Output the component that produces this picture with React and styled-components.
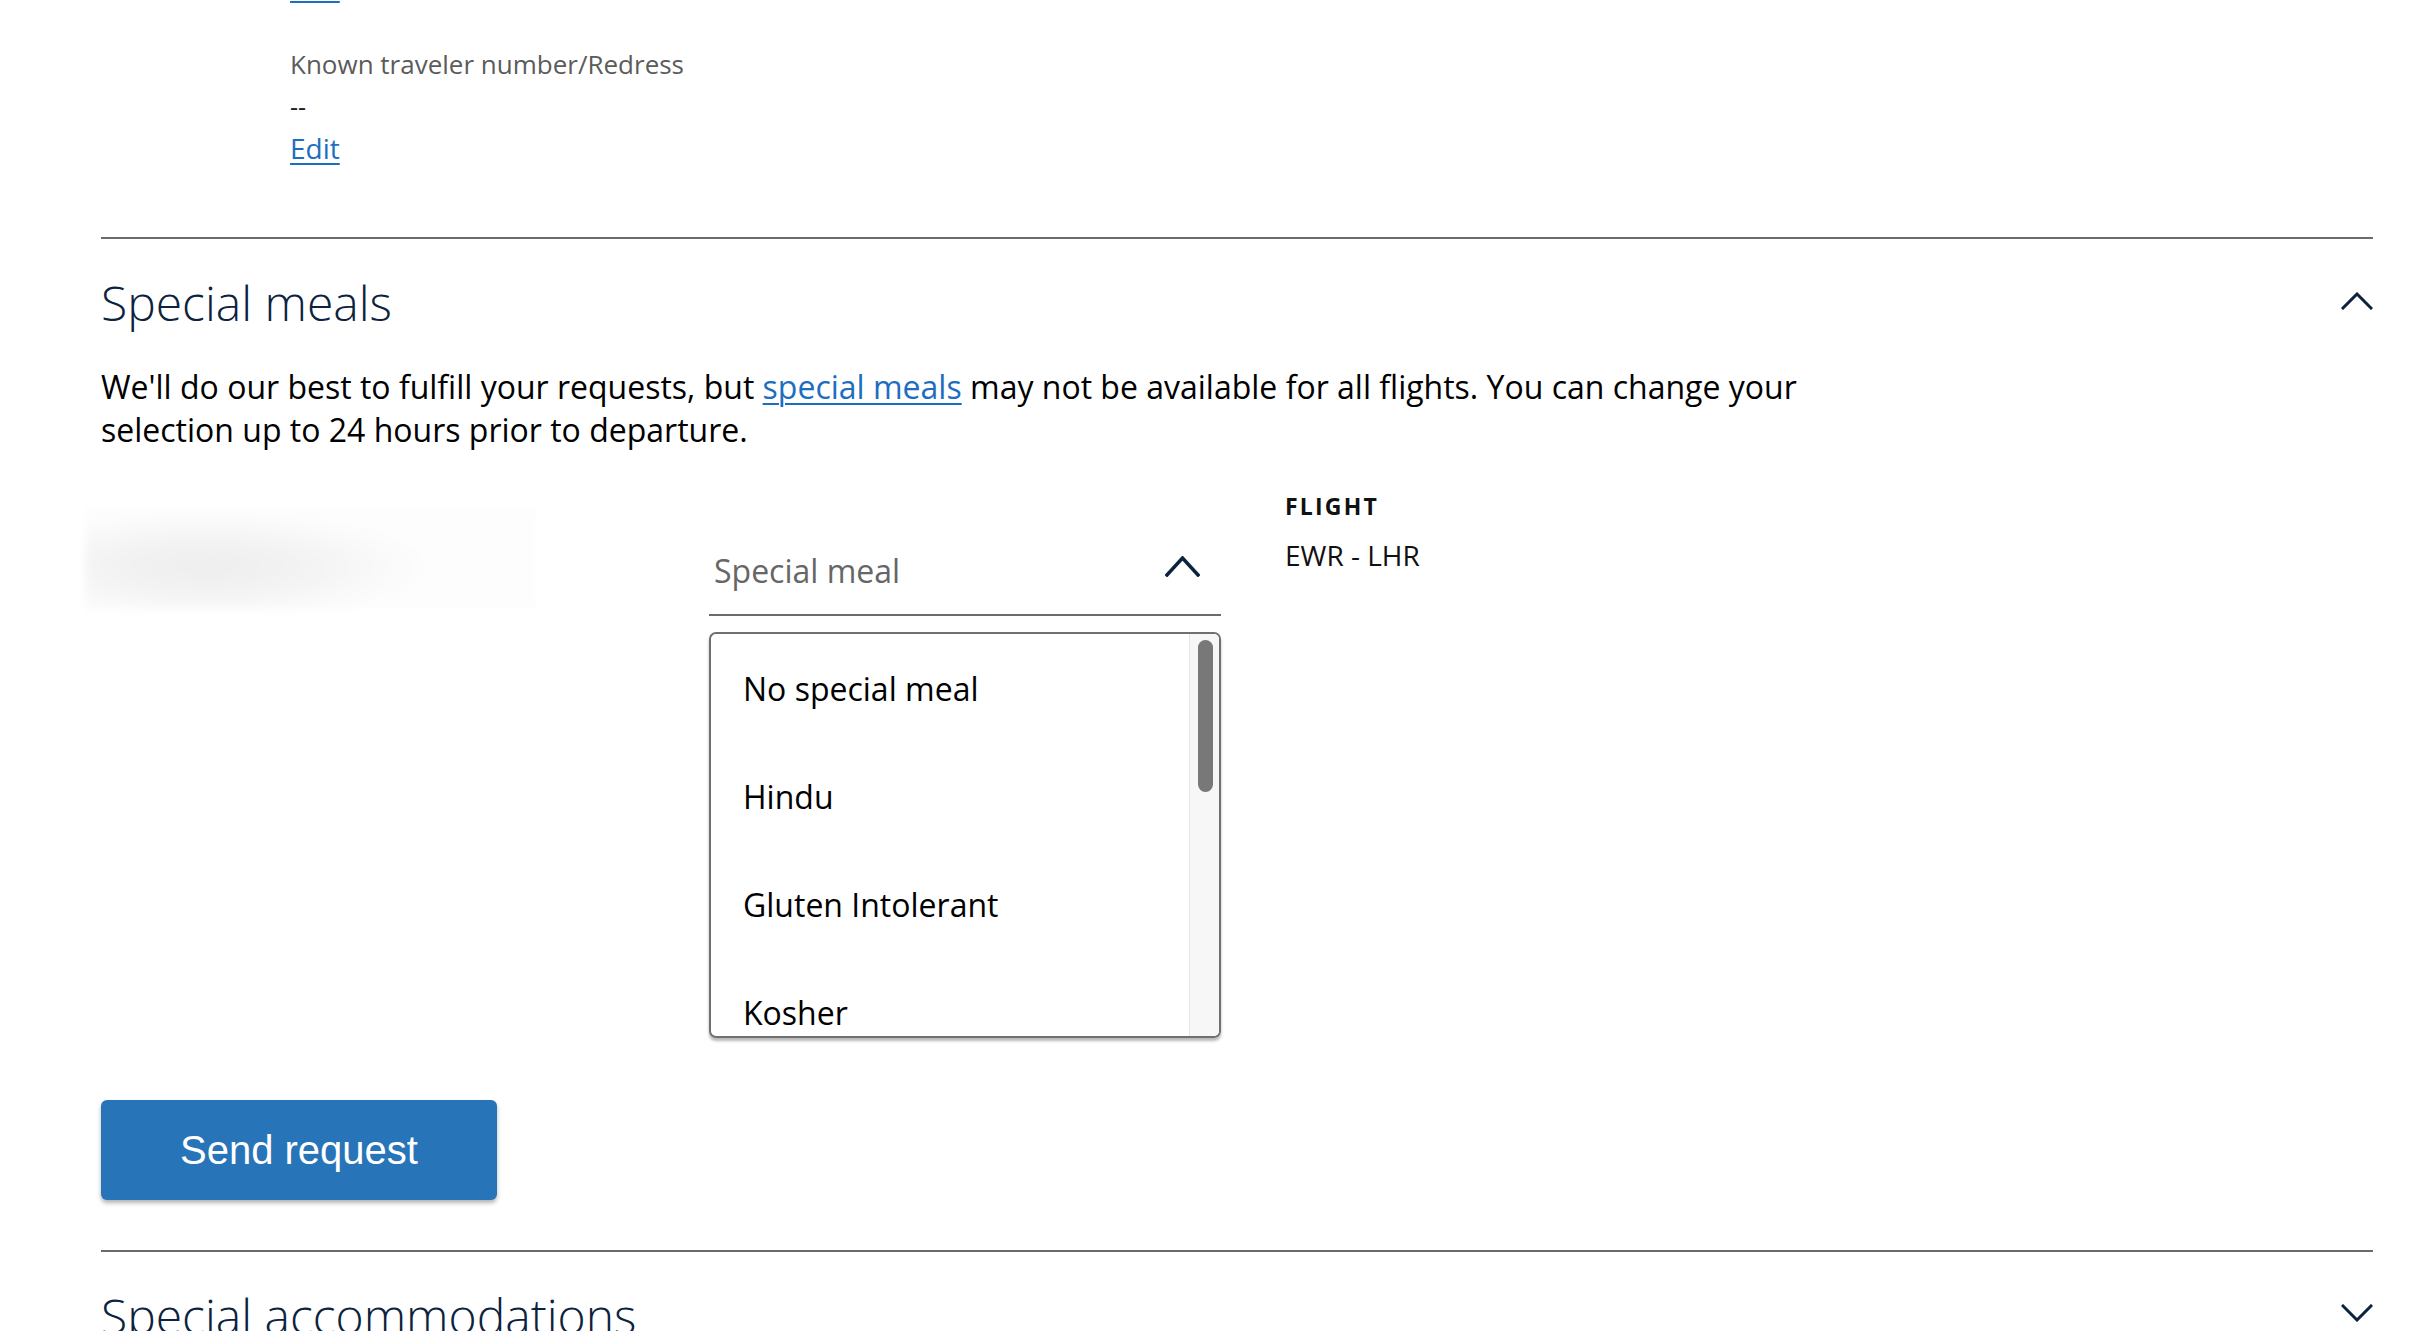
import styled, { createGlobalStyle } from "styled-components";

const GlobalStyle = createGlobalStyle`
  html, body {
    margin: 0;
    padding: 0;
    background: #fff;
  }
  body {
    font-family: "Open Sans", "Liberation Sans", sans-serif;
    color: #000;
    overflow: hidden;
  }
  * {
    box-sizing: border-box;
  }
`;

const Page = styled.div`
  padding: 0 62px 0 101px;
`;

const TravelerInfo = styled.div`
  display: flex;
  flex-direction: column;
  align-items: flex-start;
  padding-left: 189px;
  margin-top: -35px;
`;

const FieldLabel = styled.div`
  margin-top: ${({ $gap }) => $gap || 0}px;
  font-size: 26px;
  line-height: 42px;
  color: #5b5b5b;
`;

const FieldValue = styled.div`
  font-size: 25px;
  line-height: 42px;
  color: #222;
`;

const EditLink = styled.a`
  font-size: 28px;
  line-height: 42px;
  color: #1d6ec0;
  text-decoration: underline;
  text-decoration-thickness: 2px;
  text-underline-offset: 4px;
  cursor: pointer;
`;

const Divider = styled.hr`
  margin: ${({ $top }) => $top}px 0 0;
  border: 0;
  border-top: 2px solid #6b6b6b;
`;

const AccordionHeader = styled.div`
  display: flex;
  align-items: center;
  justify-content: space-between;
  margin-top: 32px;
  height: 64px;
`;

const AccordionTitle = styled.h2`
  margin: 0;
  font-size: 48px;
  font-weight: 300;
  line-height: 64px;
  color: #0c2340;
`;

const ChevronBox = styled.svg`
  flex: none;
  margin-bottom: ${({ $lift }) => $lift || 0}px;
`;

const Chevron = ({ up, width = 32, height = 18, stroke = 3, lift }) => (
  <ChevronBox
    width={width}
    height={height}
    viewBox={`0 0 ${width} ${height}`}
    $lift={lift}
  >
    <polyline
      points={
        up
          ? `2,${height - 2} ${width / 2},2 ${width - 2},${height - 2}`
          : `2,2 ${width / 2},${height - 2} ${width - 2},2`
      }
      fill="none"
      stroke="#0c2340"
      strokeWidth={stroke}
      strokeLinecap="square"
    />
  </ChevronBox>
);

const Intro = styled.p`
  margin: 30px 0 0;
  max-width: 1800px;
  font-size: 32px;
  line-height: 43px;
  color: #000;
`;

const InlineLink = styled.a`
  color: #1d6ec0;
  text-decoration: underline;
  text-decoration-thickness: 2px;
  text-underline-offset: 4px;
`;

const MealRow = styled.div`
  display: grid;
  grid-template-columns: 608px 512px 1fr;
  align-items: start;
  margin-top: 40px;
`;

const TravelerName = styled.div`
  margin: 17px 0 0 -16px;
  width: 450px;
  height: 101px;
  background: radial-gradient(
    ellipse 50% 55% at 27% 58%,
    #eeeeee 0%,
    #f2f2f2 40%,
    #f8f8f8 72%,
    #fdfdfd 100%
  );
  filter: blur(4px);
`;

const SelectColumn = styled.div`
  display: flex;
  flex-direction: column;
  margin-top: 35px;
`;

const SelectField = styled.div`
  display: flex;
  align-items: center;
  justify-content: space-between;
  height: 90px;
  padding: 0 21px 0 5px;
  border-bottom: 2px solid #6b6b6b;
`;

const SelectLabel = styled.span`
  font-size: 32px;
  color: #666;
`;

const ListBox = styled.div`
  display: flex;
  margin-top: 16px;
  height: 406px;
  overflow: hidden;
  border: 2px solid #707070;
  border-radius: 7px;
  box-shadow: 0 3px 3px rgba(0, 0, 0, 0.28);
`;

const OptionList = styled.ul`
  flex: 1;
  list-style: none;
  margin: 0;
  padding: 0;
  overflow: hidden;
`;

const Option = styled.li`
  display: flex;
  align-items: center;
  height: 108px;
  padding-left: 32px;
  font-size: 32px;
  color: #000;
`;

const ScrollTrack = styled.div`
  flex: none;
  width: 30px;
  padding: 6px 6px 0 8px;
  background: #f7f7f7;
  border-left: 1px solid #e4e4e4;
`;

const ScrollThumb = styled.div`
  height: 152px;
  border-radius: 8px;
  background: #787878;
`;

const FlightColumn = styled.div`
  display: flex;
  flex-direction: column;
  padding-left: 64px;
`;

const FlightLabel = styled.div`
  font-size: 23px;
  font-weight: 700;
  line-height: 30px;
  letter-spacing: 2.2px;
  color: #111;
`;

const FlightValue = styled.div`
  margin-top: 15px;
  font-size: 28px;
  line-height: 38px;
  color: #111;
`;

const SendButton = styled.button`
  display: block;
  margin-top: 62px;
  width: 396px;
  height: 100px;
  border: 0;
  border-radius: 6px;
  background: #2874b9;
  box-shadow: 0 3px 4px rgba(0, 0, 0, 0.3);
  color: #fff;
  font-family: "Liberation Sans", Arial, sans-serif;
  font-size: 40px;
  cursor: pointer;
`;

const meals = [
  "No special meal",
  "Hindu",
  "Gluten Intolerant",
  "Kosher",
  "Moslem",
  "Vegetarian Indian",
  "Vegan",
  "Vegetarian Lacto-ovo",
  "Asian Vegetarian",
  "Diabetic",
];

export default function App() {
  return (
    <Page>
      <GlobalStyle />
      <TravelerInfo>
        <EditLink>Edit</EditLink>
        <FieldLabel $gap={36}>Known traveler number/Redress</FieldLabel>
        <FieldValue>--</FieldValue>
        <EditLink>Edit</EditLink>
      </TravelerInfo>

      <Divider $top={68} />
      <AccordionHeader>
        <AccordionTitle>Special meals</AccordionTitle>
        <Chevron up lift={4} />
      </AccordionHeader>
      <Intro>
        We'll do our best to fulfill your requests, but{" "}
        <InlineLink>special meals</InlineLink> may not be available for all
        flights. You can change your selection up to 24 hours prior to
        departure.
      </Intro>

      <MealRow>
        <TravelerName />
        <SelectColumn>
          <SelectField>
            <SelectLabel>Special meal</SelectLabel>
            <Chevron up width={35} height={21} stroke={3.5} lift={7} />
          </SelectField>
          <ListBox>
            <OptionList>
              {meals.map((meal) => (
                <Option key={meal}>{meal}</Option>
              ))}
            </OptionList>
            <ScrollTrack>
              <ScrollThumb />
            </ScrollTrack>
          </ListBox>
        </SelectColumn>
        <FlightColumn>
          <FlightLabel>FLIGHT</FlightLabel>
          <FlightValue>EWR - LHR</FlightValue>
        </FlightColumn>
      </MealRow>

      <SendButton>Send request</SendButton>

      <Divider $top={50} />
      <AccordionHeader>
        <AccordionTitle>Special accommodations</AccordionTitle>
        <Chevron lift={6} />
      </AccordionHeader>
    </Page>
  );
}
